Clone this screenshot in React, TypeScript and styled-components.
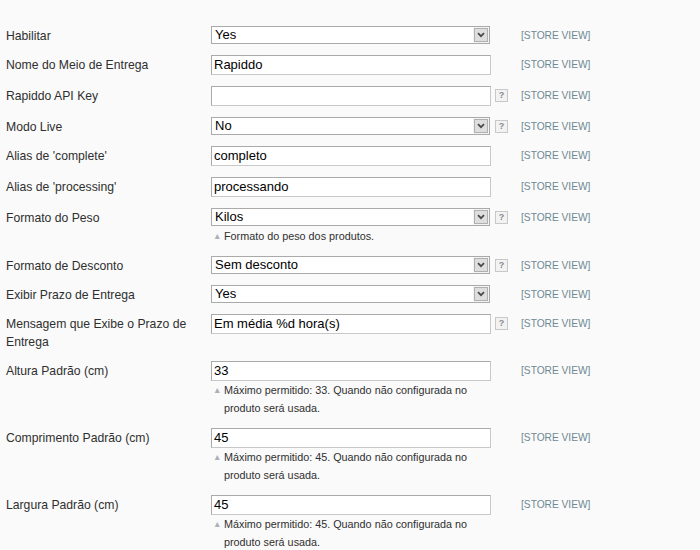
import React from "react";
import styled, { createGlobalStyle } from "styled-components";

const Global = createGlobalStyle`
  html, body { margin: 0; padding: 0; background: #fafafa; }
  body { font-family: "Liberation Sans", Arial, sans-serif; font-size: 12px; color: #2f2f2f; }
`;

const Form = styled.div`
  padding: 26px 0 0 6px;
  width: 694px;
`;

const Row = styled.div`
  display: grid;
  grid-template-columns: 205px 280px 30px auto;
  align-items: start;
  padding-bottom: 11px;
`;

const Label = styled.div`
  padding-top: 1px;
  margin-bottom: -1px;
  line-height: 18px;
  font-size: 12.2px;
  color: #2f2f2f;
  padding-right: 14px;
`;

const Value = styled.div`
  display: flex;
  flex-direction: column;
`;

const Input = styled.div`
  box-sizing: border-box;
  height: 20px;
  width: 280px;
  border: 1px solid;
  border-color: #aaa #c8c8c8 #c8c8c8 #aaa;
  background: #fff;
  padding: 0 2px;
  line-height: 18px;
  font-size: 13px;
  color: #000;
`;

const Select = styled.div`
  box-sizing: border-box;
  height: 18px;
  width: 279px;
  border: 1px solid #aaa;
  background: #fff;
  display: flex;
  align-items: stretch;
  font-size: 13px;
  color: #000;
`;

const SelectText = styled.span`
  flex: 1;
  padding-left: 3px;
  line-height: 16px;
`;

const Arrow = styled.span`
  width: 16px;
  box-sizing: border-box;
  background: #dedede;
  border: 1px solid #f4f4f4;
  outline: 1px solid #b0b0b0;
  outline-offset: -2px;
  display: flex;
  align-items: center;
  justify-content: center;
`;

const Note = styled.div<{ $gap: number }>`
  display: flex;
  margin-top: ${(p) => p.$gap}px;
  font-size: 10.8px;
  line-height: 18px;
  color: #2f2f2f;
  padding-left: 2px;
`;

const Tri = styled.span`
  width: 11px;
  flex: none;
  font-size: 8.5px;
  color: #a8b0b8;
  line-height: 18px;
`;

const HelpCell = styled.div`
  padding: 3px 0 0 4px;
`;

const Help = styled.span`
  box-sizing: border-box;
  display: flex;
  align-items: center;
  justify-content: center;
  width: 13px;
  height: 13px;
  border: 1px solid #c8c8c8;
  background: #f2f2f2;
  color: #8a8a8a;
  font-size: 9px;
  font-weight: bold;
  line-height: 1;
`;

const Scope = styled.div`
  padding-top: 1px;
  margin-bottom: -1px;
  line-height: 18px;
  font-size: 10.2px;
  color: #6f8992;
`;

type Field = {
  label: string;
  kind: "select" | "input";
  value: string;
  help?: boolean;
  note?: string;
};

const fields: Field[] = [
  { label: "Habilitar", kind: "select", value: "Yes" },
  { label: "Nome do Meio de Entrega", kind: "input", value: "Rapiddo" },
  { label: "Rapiddo API Key", kind: "input", value: "", help: true },
  { label: "Modo Live", kind: "select", value: "No", help: true },
  { label: "Alias de 'complete'", kind: "input", value: "completo" },
  { label: "Alias de 'processing'", kind: "input", value: "processando" },
  { label: "Formato do Peso", kind: "select", value: "Kilos", help: true, note: "Formato do peso dos produtos." },
  { label: "Formato de Desconto", kind: "select", value: "Sem desconto", help: true },
  { label: "Exibir Prazo de Entrega", kind: "select", value: "Yes" },
  { label: "Mensagem que Exibe o Prazo de Entrega", kind: "input", value: "Em média %d hora(s)", help: true },
  { label: "Altura Padrão (cm)", kind: "input", value: "33", note: "Máximo permitido: 33. Quando não configurada no produto será usada." },
  { label: "Comprimento Padrão (cm)", kind: "input", value: "45", note: "Máximo permitido: 45. Quando não configurada no produto será usada." },
  { label: "Largura Padrão (cm)", kind: "input", value: "45", note: "Máximo permitido: 45. Quando não configurada no produto será usada." },
];

const Chevron = () => (
  <svg width="8" height="6" viewBox="0 0 8 6">
    <path d="M1 1.2 L4 4.2 L7 1.2" fill="none" stroke="#4a4a4a" strokeWidth="1.8" />
  </svg>
);

export default function App() {
  return (
    <>
      <Global />
      <Form>
        {fields.map((f, i) => (
          <Row key={i}>
            <Label>{f.label}</Label>
            <Value>
              {f.kind === "select" ? (
                <Select>
                  <SelectText>{f.value}</SelectText>
                  <Arrow>
                    <Chevron />
                  </Arrow>
                </Select>
              ) : (
                <Input>{f.value}</Input>
              )}
              {f.note && (
                <Note $gap={f.kind === "select" ? 1 : 0}>
                  <Tri>▲</Tri>
                  <span>{f.note}</span>
                </Note>
              )}
            </Value>
            <HelpCell>{f.help && <Help>?</Help>}</HelpCell>
            <Scope>[STORE VIEW]</Scope>
          </Row>
        ))}
      </Form>
    </>
  );
}
